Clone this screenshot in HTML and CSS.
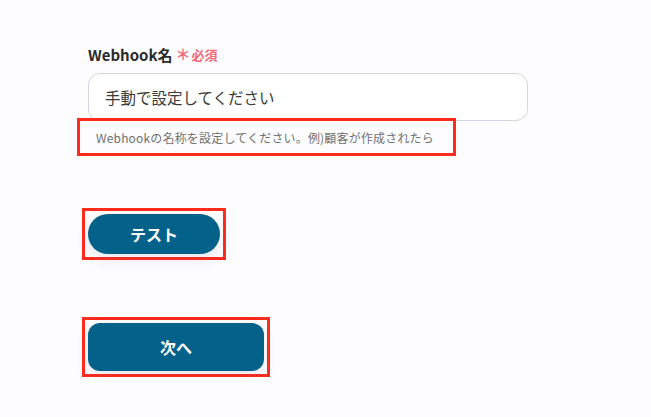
FILE: index.html
```html
<!DOCTYPE html>
<html lang="ja">

<head>
  <meta charset="UTF-8">
  <meta name="viewport" content="width=device-width, initial-scale=1.0">
  <title>Webhook設定</title>
  <link rel="stylesheet" href="styles.css">
</head>

<body>
  <div class="form">
    <div class="field-label">Webhook名<span class="required"><span class="star">＊</span>必須</span></div>
    <div class="text-input">手動で設定してください</div>
    <div class="hint mark">Webhookの名称を設定してください。例)顧客が作成されたら</div>

    <div class="mark btn-wrap test-wrap">
      <button type="button" class="btn btn-pill">テスト</button>
    </div>

    <div class="mark btn-wrap next-wrap">
      <button type="button" class="btn btn-next">次へ</button>
    </div>
  </div>
</body>

</html>
```

FILE: styles.css
```css
body {
  margin: 0;
  background-color: #fdfdff;
  font-family: "Noto Sans CJK JP", "Noto Sans", sans-serif;
  color: #333;
}

.form {
  display: flex;
  flex-direction: column;
  align-items: flex-start;
  padding: 43px 0 0 88px;
}

.field-label {
  font-size: 15px;
  font-weight: bold;
  line-height: 22px;
  color: #2b2b2b;
  display: flex;
  align-items: center;
}

.required {
  margin-left: 3px;
  font-size: 13px;
  font-weight: bold;
  color: #f06b7a;
}

.star {
  font-size: 15px;
  margin-right: 1px;
}

.text-input {
  box-sizing: border-box;
  margin-top: 7px;
  width: 440px;
  height: 48px;
  padding-left: 16px;
  display: flex;
  align-items: center;
  font-size: 15.5px;
  color: #3a3a3a;
  background: #fff;
  border: 1px solid #d3d6df;
  border-radius: 12px;
}

.mark {
  box-sizing: border-box;
  border: 3px solid #ff2b1c;
}

.hint {
  margin: -3px 0 0 -11px;
  width: 379px;
  height: 38px;
  padding-left: 16px;
  display: flex;
  align-items: center;
  font-size: 12px;
  letter-spacing: 0.18px;
  color: #707070;
}

.btn-wrap {
  margin-left: -6px;
  padding: 3px;
}

.test-wrap {
  margin-top: 52px;
}

.next-wrap {
  margin-top: 57px;
}

.btn {
  display: block;
  border: none;
  background-color: #04628a;
  color: #fff;
  font-family: "Noto Sans CJK JP", "Noto Sans", sans-serif;
  font-size: 16px;
  font-weight: bold;
  box-shadow: 0 6px 14px rgba(70, 70, 140, 0.12);
  cursor: pointer;
}

.btn-pill {
  width: 132px;
  height: 40px;
  border-radius: 20px;
}

.btn-next {
  width: 176px;
  height: 48px;
  border-radius: 12px;
}
```
